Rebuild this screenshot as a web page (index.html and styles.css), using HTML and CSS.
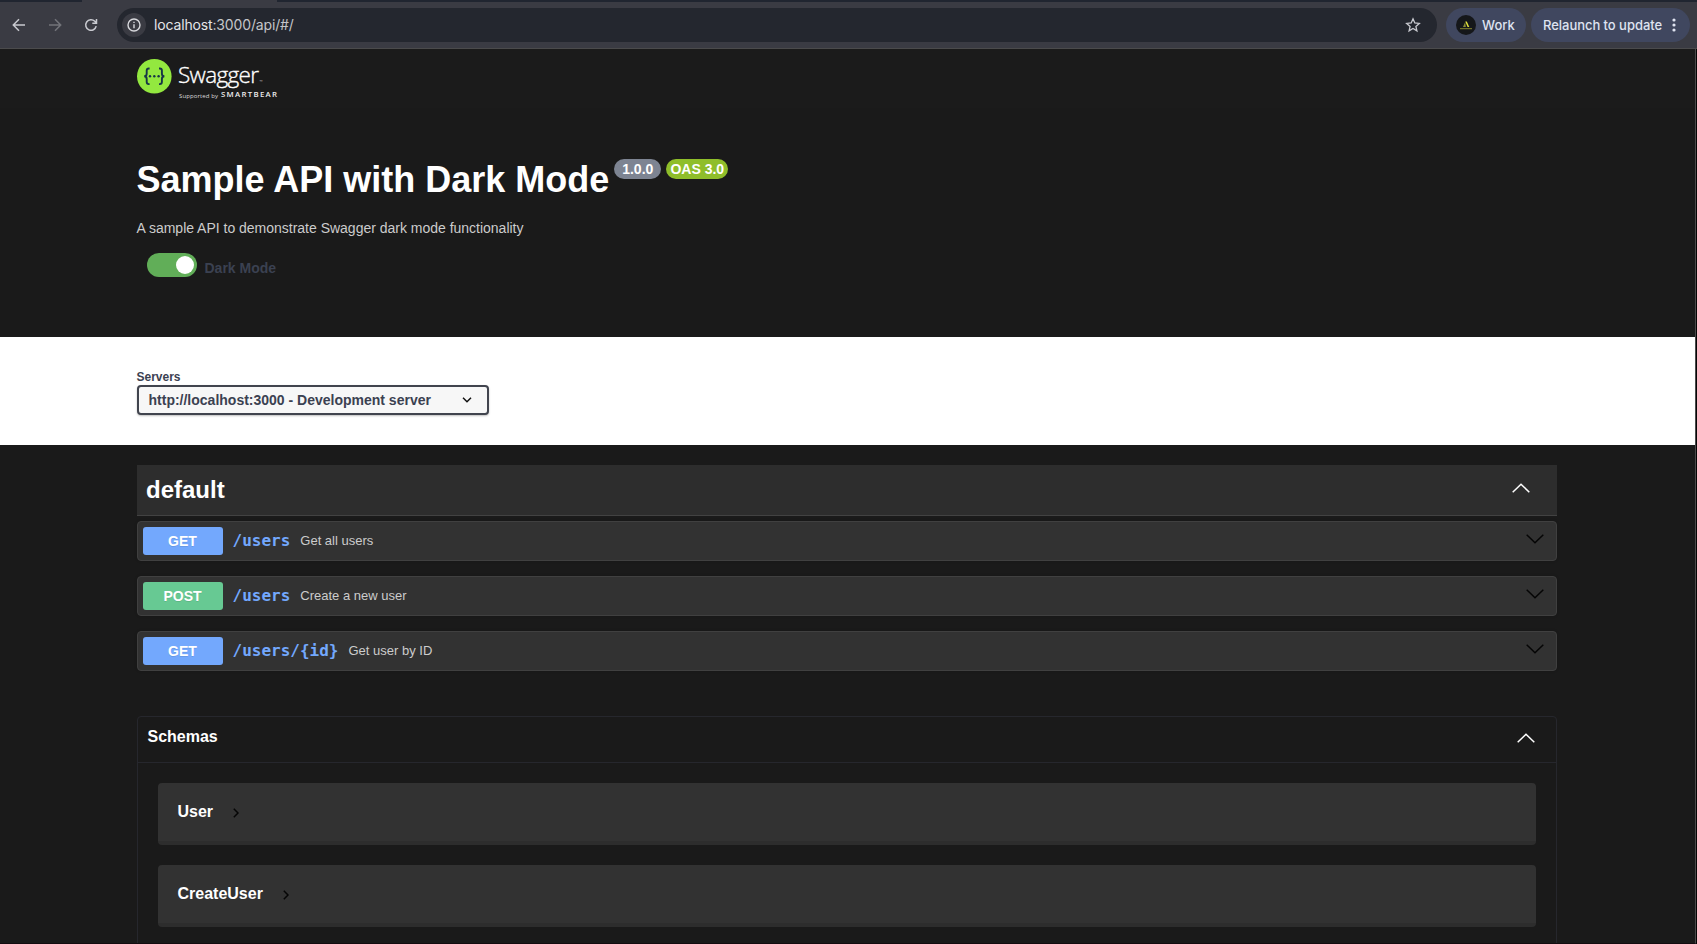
FILE: index.html
```html
<!DOCTYPE html>
<html lang="en">
<head>
<meta charset="utf-8">
<title>Swagger UI</title>
<link rel="stylesheet" href="styles.css">
</head>
<body>
<div class="window">
  <div class="tabstrip"><span class="tab-left"></span><span class="tab-right"></span></div>
  <div class="toolbar">
    <div class="nav">
      <svg class="nav-icon" viewBox="0 0 16 16"><path d="M14 8H2.500M8 2.300L2.300 8L8 13.700"/></svg>
      <svg class="nav-icon dim" viewBox="0 0 16 16"><path d="M2 8H13.500M8 2.300L13.700 8L8 13.700"/></svg>
      <svg class="nav-icon" viewBox="0 0 16 16"><path d="M13.200 9.200A5.300 5.300 0 1 1 11.800 4.300L13.500 6M13.500 2V6.200H9.300"/></svg>
    </div>
    <div class="address">
      <span class="info"><svg viewBox="0 0 14 14"><circle cx="7" cy="7" r="6"/><path d="M7 6.300V10.200M7 3.700V5.100"/></svg></span>
      <span class="url"><b>localhost</b>:3000/api/#/</span>
      <svg class="star" viewBox="0 0 16 16"><path d="M8 1.800L9.800 6L14.300 6.400L10.900 9.400L11.900 13.900L8 11.500L4.100 13.900L5.100 9.400L1.700 6.400L6.200 6Z"/></svg>
    </div>
    <div class="chip work"><svg class="avatar" viewBox="0 0 20 20"><circle cx="10" cy="10" r="10" fill="#15171a"/><path d="M7 12L9.200 7L9.800 12Z" fill="#8b8e35"/><path d="M9.300 6.500H10.800L13.300 12H11.600Z" fill="#e4e43c"/><path d="M4 13.700H16" stroke="#85852f"/></svg><span>Work</span></div>
    <div class="chip relaunch"><span>Relaunch to update</span><svg class="dots" viewBox="0 0 4 14"><circle cx="2" cy="2" r="1.600"/><circle cx="2" cy="7" r="1.600"/><circle cx="2" cy="12" r="1.600"/></svg></div>
  </div>
  <main class="page">
    <header class="topbar">
      <svg class="logo" viewBox="0 0 145 44">
        <circle cx="17.300" cy="18.300" r="17.300" fill="#93e83f"/>
        <g class="braces"><path d="M12.600 10.500H11.800Q9.700 10.500 9.700 12.600V15.500Q9.700 18.300 7.200 18.300Q9.700 18.300 9.700 21.100V24Q9.700 26.100 11.800 26.100H12.600"/><path d="M22 10.500H22.800Q24.900 10.500 24.900 12.600V15.500Q24.900 18.300 27.400 18.300Q24.900 18.300 24.900 21.100V24Q24.900 26.100 22.800 26.100H22"/></g>
        <g fill="#173647"><circle cx="13" cy="18.300" r="1.200"/><circle cx="17.300" cy="18.300" r="1.200"/><circle cx="21.600" cy="18.300" r="1.200"/></g>
        <text class="brand" x="41" y="25" textLength="81">Swagger</text>
        <text class="brand-tm" x="122.500" y="25">™</text>
        <text class="support" x="42" y="39.500" textLength="39">Supported by</text>
        <text class="bear" x="84" y="39" textLength="56">SMARTBEAR</text>
      </svg>
    </header>
    <section class="info-block">
      <div class="title-row"><h1>Sample API with Dark Mode</h1><span class="pill version">1.0.0</span><span class="pill oas">OAS 3.0</span></div>
      <p class="description">A sample API to demonstrate Swagger dark mode functionality</p>
      <div class="mode"><span class="switch"><i></i></span><label>Dark Mode</label></div>
    </section>
    <section class="servers">
      <label>Servers</label>
      <div class="select"><span>http://localhost:3000 - Development server</span><svg viewBox="0 0 10 6"><path d="M1 .800L5 4.800L9 .800"/></svg></div>
    </section>
    <section class="operations">
      <div class="tag"><h2>default</h2><svg class="chev up" viewBox="0 0 18 10"><path d="M.700 9.200L9 1.200L17.300 9.200"/></svg></div>
      <div class="op"><span class="method get">GET</span><span class="path">/users</span><span class="summary">Get all users</span><svg class="chev" viewBox="0 0 18 10"><path d="M.700 .800L9 8.800L17.300 .800"/></svg></div>
      <div class="op"><span class="method post">POST</span><span class="path">/users</span><span class="summary">Create a new user</span><svg class="chev" viewBox="0 0 18 10"><path d="M.700 .800L9 8.800L17.300 .800"/></svg></div>
      <div class="op"><span class="method get">GET</span><span class="path">/users/{id}</span><span class="summary">Get user by ID</span><svg class="chev" viewBox="0 0 18 10"><path d="M.700 .800L9 8.800L17.300 .800"/></svg></div>
    </section>
    <section class="schemas">
      <div class="schemas-head"><h3>Schemas</h3><svg class="chev up" viewBox="0 0 18 10"><path d="M.700 9.200L9 1.200L17.300 9.200"/></svg></div>
      <div class="model"><span>User</span><svg viewBox="0 0 6 10"><path d="M.800 .800L5 5L.800 9.200"/></svg></div>
      <div class="model"><span>CreateUser</span><svg viewBox="0 0 6 10"><path d="M.800 .800L5 5L.800 9.200"/></svg></div>
    </section>
  </main>
</div>
</body>
</html>
```
FILE: styles.css
```css
* { box-sizing: border-box; }
body { margin: 0; background: #050505; font-family: "Liberation Sans", Arial, sans-serif; overflow: hidden; }
h1, h2, h3, p { margin: 0; }
svg { display: block; flex: none; fill: none; }
.window { display: flex; flex-direction: column; width: 1697px; height: 944px; overflow: hidden; }

/* Browser chrome */
.tabstrip { display: flex; justify-content: space-between; height: 2px; flex: none; background: #3a3b43; }
.tab-left { width: 82px; background: #202530; }
.tab-right { width: 1420px; background: #202530; }
.toolbar { display: flex; align-items: center; height: 47px; flex: none; padding: 0 7px 1px 11px; background: #3a3b43; border-bottom: 1px solid #4b4b4c; }
.nav { display: flex; gap: 20px; width: 106px; }
.nav-icon { width: 16px; height: 16px; stroke: #c9cad0; stroke-width: 1.500; }
.dim { stroke: #73747a; }
.address { display: flex; align-items: center; width: 1320px; height: 34px; padding: 0 16px 0 5px; border-radius: 17px; background: #24272f; }
.info { display: grid; place-items: center; width: 24px; height: 24px; border-radius: 50%; background: #3a3b43; }
.info svg { width: 14px; height: 14px; stroke: #d8d9dd; stroke-width: 1.400; }
.url { margin-left: 8px; font: 14px/20px Inter, sans-serif; letter-spacing: -.15px; color: #c4c5c8; }
.url b { font-weight: 400; color: #e4e5e8; }
.star { width: 16px; height: 16px; margin-left: auto; stroke: #c9cad0; stroke-width: 1.300; }
.chip { display: flex; align-items: center; height: 34px; border-radius: 17px; background: #40475f; color: #dfe3f1; font: 500 13px/20px Inter, sans-serif; white-space: nowrap; }
.work { width: 80px; margin-left: 9px; padding-left: 10px; gap: 6px; }
.avatar { width: 20px; height: 20px; }
.relaunch { width: 159px; margin-left: 5px; padding-left: 12px; }
.relaunch span { letter-spacing: -.04px; }
.dots { width: 4px; height: 14px; margin-left: auto; margin-right: 14px; fill: #dfe3f1; }

/* Swagger page */
.page { flex: 1; min-height: 0; overflow: hidden; background: #1a1a1a; border-right: 1px solid #4a4a4a; border-bottom: 1px solid #130c10; margin-right: 1px; }
.topbar { height: 59px; padding: 9px 137px; background: #1b1b1b; }
.logo { width: 145px; height: 44px; }
.braces { stroke: #173647; stroke-width: 1.900; }
.brand { font: 300 22.500px "Open Sans", sans-serif; fill: #fff; stroke: #fff; stroke-width: .35; }
.brand-tm { font: 4px "Open Sans", sans-serif; fill: #bbb; }
.support { font: 6px "Open Sans", sans-serif; fill: #ddd; }
.bear { font: 600 7.800px "Open Sans", sans-serif; fill: #eee; }
.info-block { height: 229px; padding: 51px 137px 0 136.500px; }
.title-row { display: flex; height: 42px; }
h1 { font-size: 36px; line-height: 42px; color: #fff; white-space: nowrap; }
.pill { height: 20px; border-radius: 10px; color: #fff; font: bold 14px/20px "Liberation Sans", Arial, sans-serif; text-align: center; }
.version { width: 47px; margin-left: 4.500px; padding-left: 1px; background: #7d8492; }
.oas { width: 62px; margin-left: 5px; padding-left: 1px; background: #8fbe2a; }
.description { margin-top: 19px; font-size: 14px; line-height: 16px; color: #ccc; letter-spacing: -.01px; }
.mode { display: flex; align-items: center; gap: 7.500px; margin: 17px 0 0 10.500px; height: 24px; }
.switch { display: flex; justify-content: flex-end; width: 50px; height: 24px; padding: 3px; border-radius: 12px; background: #61ae58; }
.switch i { width: 18px; height: 18px; border-radius: 50%; background: #fff; }
.mode label { margin-top: 6px; font: bold 14px/16px "Liberation Sans", Arial, sans-serif; color: #3b4151; }
.servers { height: 108px; padding: 33px 137px 0; background: #fff; color: #3b4151; font-weight: bold; }
.servers label { display: block; margin-left: -.5px; font-size: 12px; line-height: 15px; }
.select { display: flex; align-items: center; justify-content: space-between; width: 352px; height: 30px; padding: 0 15px 0 9.500px; border: 2px solid #41444e; border-radius: 4px; background: #f7f7f7; box-shadow: 0 1px 2px rgba(0,0,0,.25); font-size: 14px; white-space: nowrap; }
.select svg { width: 10px; height: 6px; stroke: #111; stroke-width: 1.500; }
.operations { width: 1420px; margin-left: 137px; padding-top: 20px; }
.tag { display: flex; justify-content: space-between; height: 51px; margin-bottom: 5px; padding: 11px 27px 0 9px; background: #2d2d2d; border-bottom: 1px solid #424242; }
h2 { font-size: 24px; line-height: 28px; color: #fff; }
.chev { width: 18px; height: 10px; stroke: #050505; stroke-width: 1.500; }
.chev.up { stroke: #fff; margin-top: 7px; }
.op { display: flex; align-items: center; height: 40px; margin-bottom: 15px; padding: 0 12px 0 5px; border: 1px solid #404040; border-radius: 4px; background: #323232; box-shadow: 0 0 3px rgba(0,0,0,.19); }
.op .chev { margin: 0 0 5px auto; }
.method { width: 80px; height: 28px; padding-right: 1px; border-radius: 3px; color: #fff; font: bold 14px/28px "Liberation Sans", Arial, sans-serif; text-align: center; text-shadow: 0 1px 0 rgba(0,0,0,.1); }
.get { background: #73a8fd; }
.post { background: #67c993; }
.path { margin-left: 9.500px; font: bold 16px/20px "DejaVu Sans Mono", monospace; color: #73a8fd; }
.summary { margin-left: 10px; font-size: 13px; line-height: 16px; color: #ccc; }
.schemas { width: 1420px; height: 300px; margin: 45px 0 0 137px; border: 1px solid #26272d; border-radius: 4px; }
.schemas-head { display: flex; justify-content: space-between; height: 46px; padding: 10px 21px 0 9.500px; border-bottom: 1px solid #26272d; }
h3 { font-size: 16px; line-height: 20px; color: #fff; }
.schemas-head .chev.up { margin-top: 6px; }
.model { display: flex; align-items: center; gap: 20px; height: 62px; margin: 20px; padding: 0 19.500px 0; border-bottom: 4px solid #2d2d2d; border-radius: 4px; background: #323232; color: #fff; font-weight: bold; font-size: 16px; }
.model svg { width: 6px; height: 10px; margin-top: 2px; stroke: #050505; stroke-width: 1.500; }
```
